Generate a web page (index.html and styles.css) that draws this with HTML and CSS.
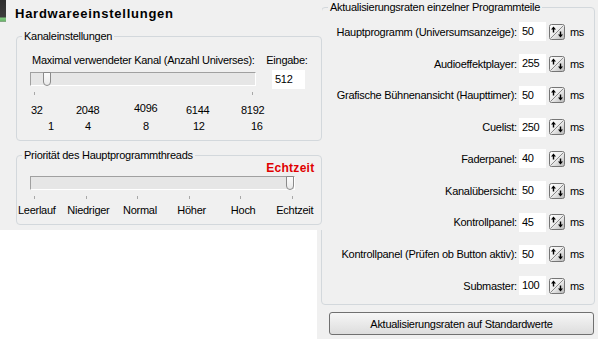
FILE: index.html
```html
<!DOCTYPE html>
<html lang="de">
<head>
    <meta charset="UTF-8">
    <title>Hardwareeinstellungen</title>
    <link rel="stylesheet" href="styles.css">
</head>
<body>
    <div class="screen">
        <!-- linkes Fenster (liegt etwas über dem rechten) -->
        <div class="left-panel">
            <div class="edge"></div>
            <div class="left-content">
                <h1 class="title">Hardwareeinstellungen</h1>

                <fieldset class="group group-channels">
                    <legend>Kanaleinstellungen</legend>
                    <div class="label-row">
                        <span>Maximal verwendeter Kanal (Anzahl Universes):</span>
                        <span>Eingabe:</span>
                    </div>
                    <div class="slider-row">
                        <div class="slider-block">
                            <div class="track track-channels"><div class="thumb"></div></div>
                            <div class="ticks"><i></i><i></i></div>
                        </div>
                        <div class="value-box">512</div>
                    </div>
                    <div class="nums nums-top">
                        <span>32</span><span>2048</span><span class="raised">4096</span><span>6144</span><span>8192</span>
                    </div>
                    <div class="nums nums-bottom">
                        <span>1</span><span>4</span><span>8</span><span>12</span><span>16</span>
                    </div>
                </fieldset>

                <fieldset class="group group-priority">
                    <legend>Priorität des Hauptprogrammthreads</legend>
                    <div class="prio-value">Echtzeit</div>
                    <div class="track track-priority"><div class="thumb"></div></div>
                    <div class="ticks ticks-six"><i></i><i></i><i></i><i></i><i></i><i></i></div>
                    <div class="prio-labels">
                        <span>Leerlauf</span><span>Niedriger</span><span>Normal</span><span>Höher</span><span>Hoch</span><span>Echtzeit</span>
                    </div>
                </fieldset>
            </div>
        </div>

        <!-- rechtes Fenster -->
        <div class="right-panel">
            <fieldset class="group group-rates">
                <legend>Aktualisierungsraten einzelner Programmteile</legend>
                <div class="rate-row"><span class="rate-label">Hauptprogramm (Universumsanzeige):</span><span class="rate-input">50</span><span class="spin"></span><span class="unit">ms</span></div>
                <div class="rate-row"><span class="rate-label">Audioeffektplayer:</span><span class="rate-input">255</span><span class="spin"></span><span class="unit">ms</span></div>
                <div class="rate-row"><span class="rate-label">Grafische Bühnenansicht (Haupttimer):</span><span class="rate-input">50</span><span class="spin"></span><span class="unit">ms</span></div>
                <div class="rate-row"><span class="rate-label">Cuelist:</span><span class="rate-input">250</span><span class="spin"></span><span class="unit">ms</span></div>
                <div class="rate-row"><span class="rate-label">Faderpanel:</span><span class="rate-input">40</span><span class="spin"></span><span class="unit">ms</span></div>
                <div class="rate-row"><span class="rate-label">Kanalübersicht:</span><span class="rate-input">50</span><span class="spin"></span><span class="unit">ms</span></div>
                <div class="rate-row"><span class="rate-label">Kontrollpanel:</span><span class="rate-input">45</span><span class="spin"></span><span class="unit">ms</span></div>
                <div class="rate-row"><span class="rate-label">Kontrollpanel (Prüfen ob Button aktiv):</span><span class="rate-input">50</span><span class="spin"></span><span class="unit">ms</span></div>
                <div class="rate-row"><span class="rate-label">Submaster:</span><span class="rate-input">100</span><span class="spin"></span><span class="unit">ms</span></div>
            </fieldset>
            <button class="reset-button">Aktualisierungsraten auf Standardwerte</button>
        </div>
    </div>

    <script>
        // Spin-Buttons (Pfeil hoch / Pfeil runter) einsetzen
        const spinSvg = '<svg width="16" height="16" viewBox="0 0 16 16">' +
            '<defs><linearGradient id="g" x1="0" y1="0" x2="1" y2="1">' +
            '<stop offset="0" stop-color="#fff"/><stop offset="0.5" stop-color="#ececec"/><stop offset="1" stop-color="#b4b4b4"/></linearGradient></defs>' +
            '<rect x="0.5" y="0.5" width="15" height="15" rx="2" fill="url(#g)" stroke="#757575"/>' +
            '<path d="M2 14 L14 2" stroke="#8a8a8a" stroke-width="1"/>' +
            '<path d="M4.5 2.5 L2 5.5 L3.8 5.5 L3.8 8.5 L5.2 8.5 L5.2 5.5 L7 5.5 Z" fill="#000"/>' +
            '<path d="M11.5 13.5 L9 10.5 L10.8 10.5 L10.8 7.5 L12.2 7.5 L12.2 10.5 L14 10.5 Z" fill="#000"/>' +
            '</svg>';
        document.querySelectorAll('.spin').forEach((el) => {
            el.innerHTML = spinSvg;
        });
    </script>
</body>
</html>
```

FILE: styles.css
```css
body {
    margin: 0;
    background: #fff;
    font-family: "Liberation Sans", Arial, sans-serif;
    font-size: 11px;
    letter-spacing: -0.27px;
    color: #000;
    white-space: nowrap;
}

.screen {
    display: grid;
    grid-template-columns: 317px 5px 276px;
    width: 598px;
    height: 339px;
    overflow: hidden;
}

/* linkes Fenster */
.left-panel {
    grid-column: 1 / 3;
    grid-row: 1;
    z-index: 1;
    align-self: start;
    height: 230px;
    background: #f0f0f0;
    display: flex;
}

.edge {
    width: 6px;
    height: 22px;
    flex-shrink: 0;
    background: linear-gradient(#2e2e2e 0, #3c3c3c 17px, #7fc77f 18px, #6bb56b 21px, #9a9a9a 22px);
}

.left-content {
    flex: 1;
}

.title {
    margin: 0;
    padding: 6px 0 0 9px;
    height: 23px;
    box-sizing: border-box;
    font-size: 13px;
    font-weight: bold;
    letter-spacing: 0.75px;
}

.group {
    margin: 0;
    border: 1px solid #d3d8dc;
    border-radius: 4px;
    min-width: 0;
}

.group legend {
    padding: 0 2px;
    margin-left: 5px;
    line-height: 13px;
}

.group-channels {
    margin: 7px 4px 0 10px;
    padding: 11px 0 0 0;
    height: 111px;
    box-sizing: border-box;
}

.label-row {
    display: flex;
    justify-content: space-between;
    padding: 0 13px 0 15px;
    line-height: 13px;
}

.slider-row {
    display: flex;
    align-items: flex-start;
    padding: 0 0 0 13px;
    margin-top: 3px;
}

.track {
    height: 14px;
    box-sizing: border-box;
    background: #e6e6e6;
    border-top: 1px solid #a0a0a0;
    border-left: 1px solid #a0a0a0;
    border-bottom: 1px solid #fff;
    border-right: 1px solid #fff;
    display: flex;
    align-items: flex-start;
}

.track-channels {
    width: 226px;
    margin-top: 2px;
}

.thumb {
    width: 8px;
    height: 14px;
    box-sizing: border-box;
    margin-top: -1px;
    background: linear-gradient(#fcfcfc, #e9e9e9);
    border: 1px solid #8a8a8a;
    border-radius: 1px 1px 4px 4px;
}

.track-channels .thumb {
    margin-left: 12px;
}

.ticks {
    display: flex;
    justify-content: space-between;
    padding: 0 3px 0 4px;
    margin-top: 6px;
}

.ticks i {
    display: block;
    width: 1px;
    height: 3px;
    background: #a8a8a8;
}

.value-box {
    width: 33px;
    height: 19px;
    box-sizing: border-box;
    margin-left: 16px;
    background: #fff;
    padding: 3px 0 0 3px;
    line-height: 13px;
}

.nums {
    display: grid;
    line-height: 13px;
}

.nums-top {
    grid-template-columns: 45px 58px 52px 55px auto;
    padding-left: 14px;
    margin-top: 9px;
}

.nums-top .raised {
    margin-top: -2px;
}

.nums-bottom {
    grid-template-columns: 37px 58px 50px 58px auto;
    padding-left: 31px;
    margin-top: 3px;
}

.group-priority {
    margin: 8px 4px 0 10px;
    padding: 0;
    height: 76px;
    box-sizing: border-box;
}

.prio-value {
    text-align: right;
    padding-right: 6px;
    color: #e00000;
    font-weight: bold;
    font-size: 12px;
    letter-spacing: 0.3px;
    line-height: 13px;
}

.track-priority {
    width: 265px;
    margin: 1px 0 0 13px;
    justify-content: flex-end;
}

.ticks-six {
    width: 259px;
    padding: 0;
    margin-left: 17px;
}

.prio-labels {
    display: grid;
    grid-template-columns: repeat(6, 51.6px);
    margin-left: -6px;
    margin-top: 5px;
    line-height: 13px;
    text-align: center;
}

/* rechtes Fenster */
.right-panel {
    grid-column: 2 / 4;
    grid-row: 1;
    background: #f0f0f0;
    padding: 0 3px 0 4px;
}

.group-rates {
    height: 304px;
    box-sizing: border-box;
    padding: 2px 10px 0 0;
    margin-top: 1px;
}

.group-rates legend {
    margin-left: 6px;
}

.rate-row {
    display: flex;
    justify-content: flex-end;
    align-items: center;
    height: 31.75px;
}

.rate-input {
    width: 27px;
    height: 19px;
    box-sizing: border-box;
    margin-left: 2px;
    padding: 3px 0 0 3px;
    line-height: 13px;
    background: #fff;
}

.spin {
    width: 16px;
    height: 16px;
    margin-left: 3px;
}

.spin svg {
    display: block;
}

.unit {
    margin-left: 5px;
}

.reset-button {
    display: block;
    width: 265px;
    height: 23px;
    margin: 7px 0 0 8px;
    font-family: inherit;
    font-size: 11px;
    letter-spacing: -0.27px;
    color: #000;
    background: linear-gradient(#f6f6f6, #dddddd);
    border: 1px solid #707070;
    border-radius: 3px;
    padding: 0;
}
```
